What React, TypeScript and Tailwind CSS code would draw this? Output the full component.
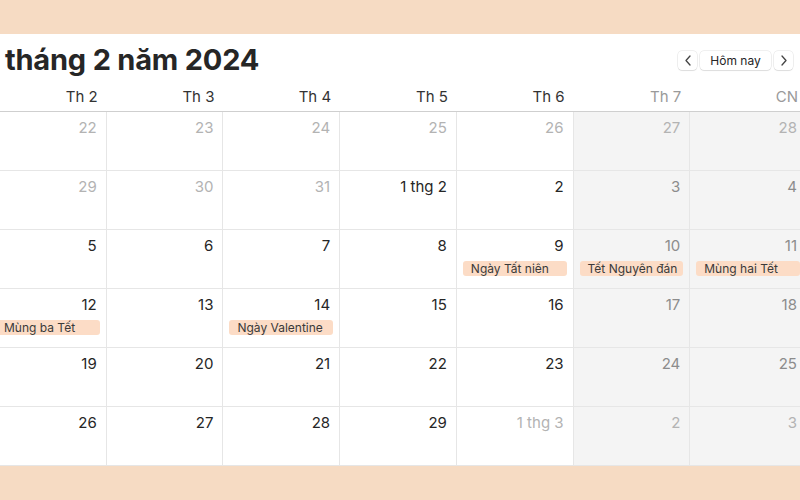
import React from "react";

type Day = {
  label: string;
  muted?: boolean;
  event?: string;
};

const weekdays = ["Th 2", "Th 3", "Th 4", "Th 5", "Th 6", "Th 7", "CN"];

const weeks: Day[][] = [
  [
    { label: "22", muted: true },
    { label: "23", muted: true },
    { label: "24", muted: true },
    { label: "25", muted: true },
    { label: "26", muted: true },
    { label: "27", muted: true },
    { label: "28", muted: true },
  ],
  [
    { label: "29", muted: true },
    { label: "30", muted: true },
    { label: "31", muted: true },
    { label: "1 thg 2" },
    { label: "2" },
    { label: "3" },
    { label: "4" },
  ],
  [
    { label: "5" },
    { label: "6" },
    { label: "7" },
    { label: "8" },
    { label: "9", event: "Ngày Tất niên" },
    { label: "10", event: "Tết Nguyên đán" },
    { label: "11", event: "Mùng hai Tết" },
  ],
  [
    { label: "12", event: "Mùng ba Tết" },
    { label: "13" },
    { label: "14", event: "Ngày Valentine" },
    { label: "15" },
    { label: "16" },
    { label: "17" },
    { label: "18" },
  ],
  [
    { label: "19" },
    { label: "20" },
    { label: "21" },
    { label: "22" },
    { label: "23" },
    { label: "24" },
    { label: "25" },
  ],
  [
    { label: "26" },
    { label: "27" },
    { label: "28" },
    { label: "29" },
    { label: "1 thg 3", muted: true },
    { label: "2", muted: true },
    { label: "3", muted: true },
  ],
];

function DayCell({ day, weekend }: { day: Day; weekend: boolean }) {
  const color = day.muted
    ? "text-[#b3b3b3]"
    : weekend
    ? "text-[#8c8c8c]"
    : "text-[#262626]";
  return (
    <div
      className={`border-r border-b border-[#e6e6e6] overflow-hidden ${
        weekend ? "bg-[#f4f4f4]" : "bg-white"
      }`}
    >
      <div className={`pt-[6px] pr-[9px] text-right text-[15px] leading-[20px] ${color}`}>
        {day.label}
      </div>
      {day.event && (
        <div className="mx-[6px] mt-[5px] h-[15px] rounded-[3px] bg-[#fcdcc6] pl-[8px] text-[12px] leading-[15px] text-[#3a3a3a] whitespace-nowrap">
          {day.event}
        </div>
      )}
    </div>
  );
}

export default function App() {
  return (
    <div className="h-[500px] w-[800px] overflow-hidden bg-[#f6dbc3] py-[34px] font-['Inter','Noto_Sans',sans-serif]">
      <div className="h-[432px] overflow-hidden bg-white flex flex-col">
        <div className="h-[50px] flex items-start justify-between">
          <h1 className="pl-[5px] pt-[9px] text-[29px] leading-[34px] font-bold tracking-[-0.2px] text-[#262626]">
            tháng 2 năm 2024
          </h1>
          <div className="flex items-center gap-[3px] pt-[17px] pr-[7px]">
            <button className="h-[19px] w-[19px] flex items-center justify-center rounded-[4px] bg-white shadow-[0_0_0_0.5px_rgba(0,0,0,0.12),0_1px_1px_rgba(0,0,0,0.08)]">
              <svg width="8" height="11" viewBox="0 0 8 11" fill="none">
                <path d="M6 1L2 5.5L6 10" stroke="#444" strokeWidth="1.3" strokeLinecap="round" strokeLinejoin="round" />
              </svg>
            </button>
            <button className="h-[19px] w-[71px] rounded-[4px] bg-white text-[12px] leading-[19px] text-[#262626] shadow-[0_0_0_0.5px_rgba(0,0,0,0.12),0_1px_1px_rgba(0,0,0,0.08)]">
              Hôm nay
            </button>
            <button className="h-[19px] w-[19px] flex items-center justify-center rounded-[4px] bg-white shadow-[0_0_0_0.5px_rgba(0,0,0,0.12),0_1px_1px_rgba(0,0,0,0.08)]">
              <svg width="8" height="11" viewBox="0 0 8 11" fill="none">
                <path d="M2 1L6 5.5L2 10" stroke="#444" strokeWidth="1.3" strokeLinecap="round" strokeLinejoin="round" />
              </svg>
            </button>
          </div>
        </div>

        <div className="ml-[-10px] w-[817px] flex-1 flex flex-col">
          <div className="h-[28px] grid grid-cols-7 border-b border-[#cfcfcf]">
            {weekdays.map((w, i) => (
              <div
                key={w}
                className={`pr-[9px] pt-[1px] text-right text-[15px] leading-[24px] ${
                  i >= 5 ? "text-[#9a9a9a]" : "text-[#333333]"
                }`}
              >
                {w}
              </div>
            ))}
          </div>
          <div className="flex-1 grid grid-cols-7 grid-rows-6">
            {weeks.map((week, wi) =>
              week.map((day, di) => (
                <DayCell key={`${wi}-${di}`} day={day} weekend={di >= 5} />
              ))
            )}
          </div>
        </div>
      </div>
    </div>
  );
}
